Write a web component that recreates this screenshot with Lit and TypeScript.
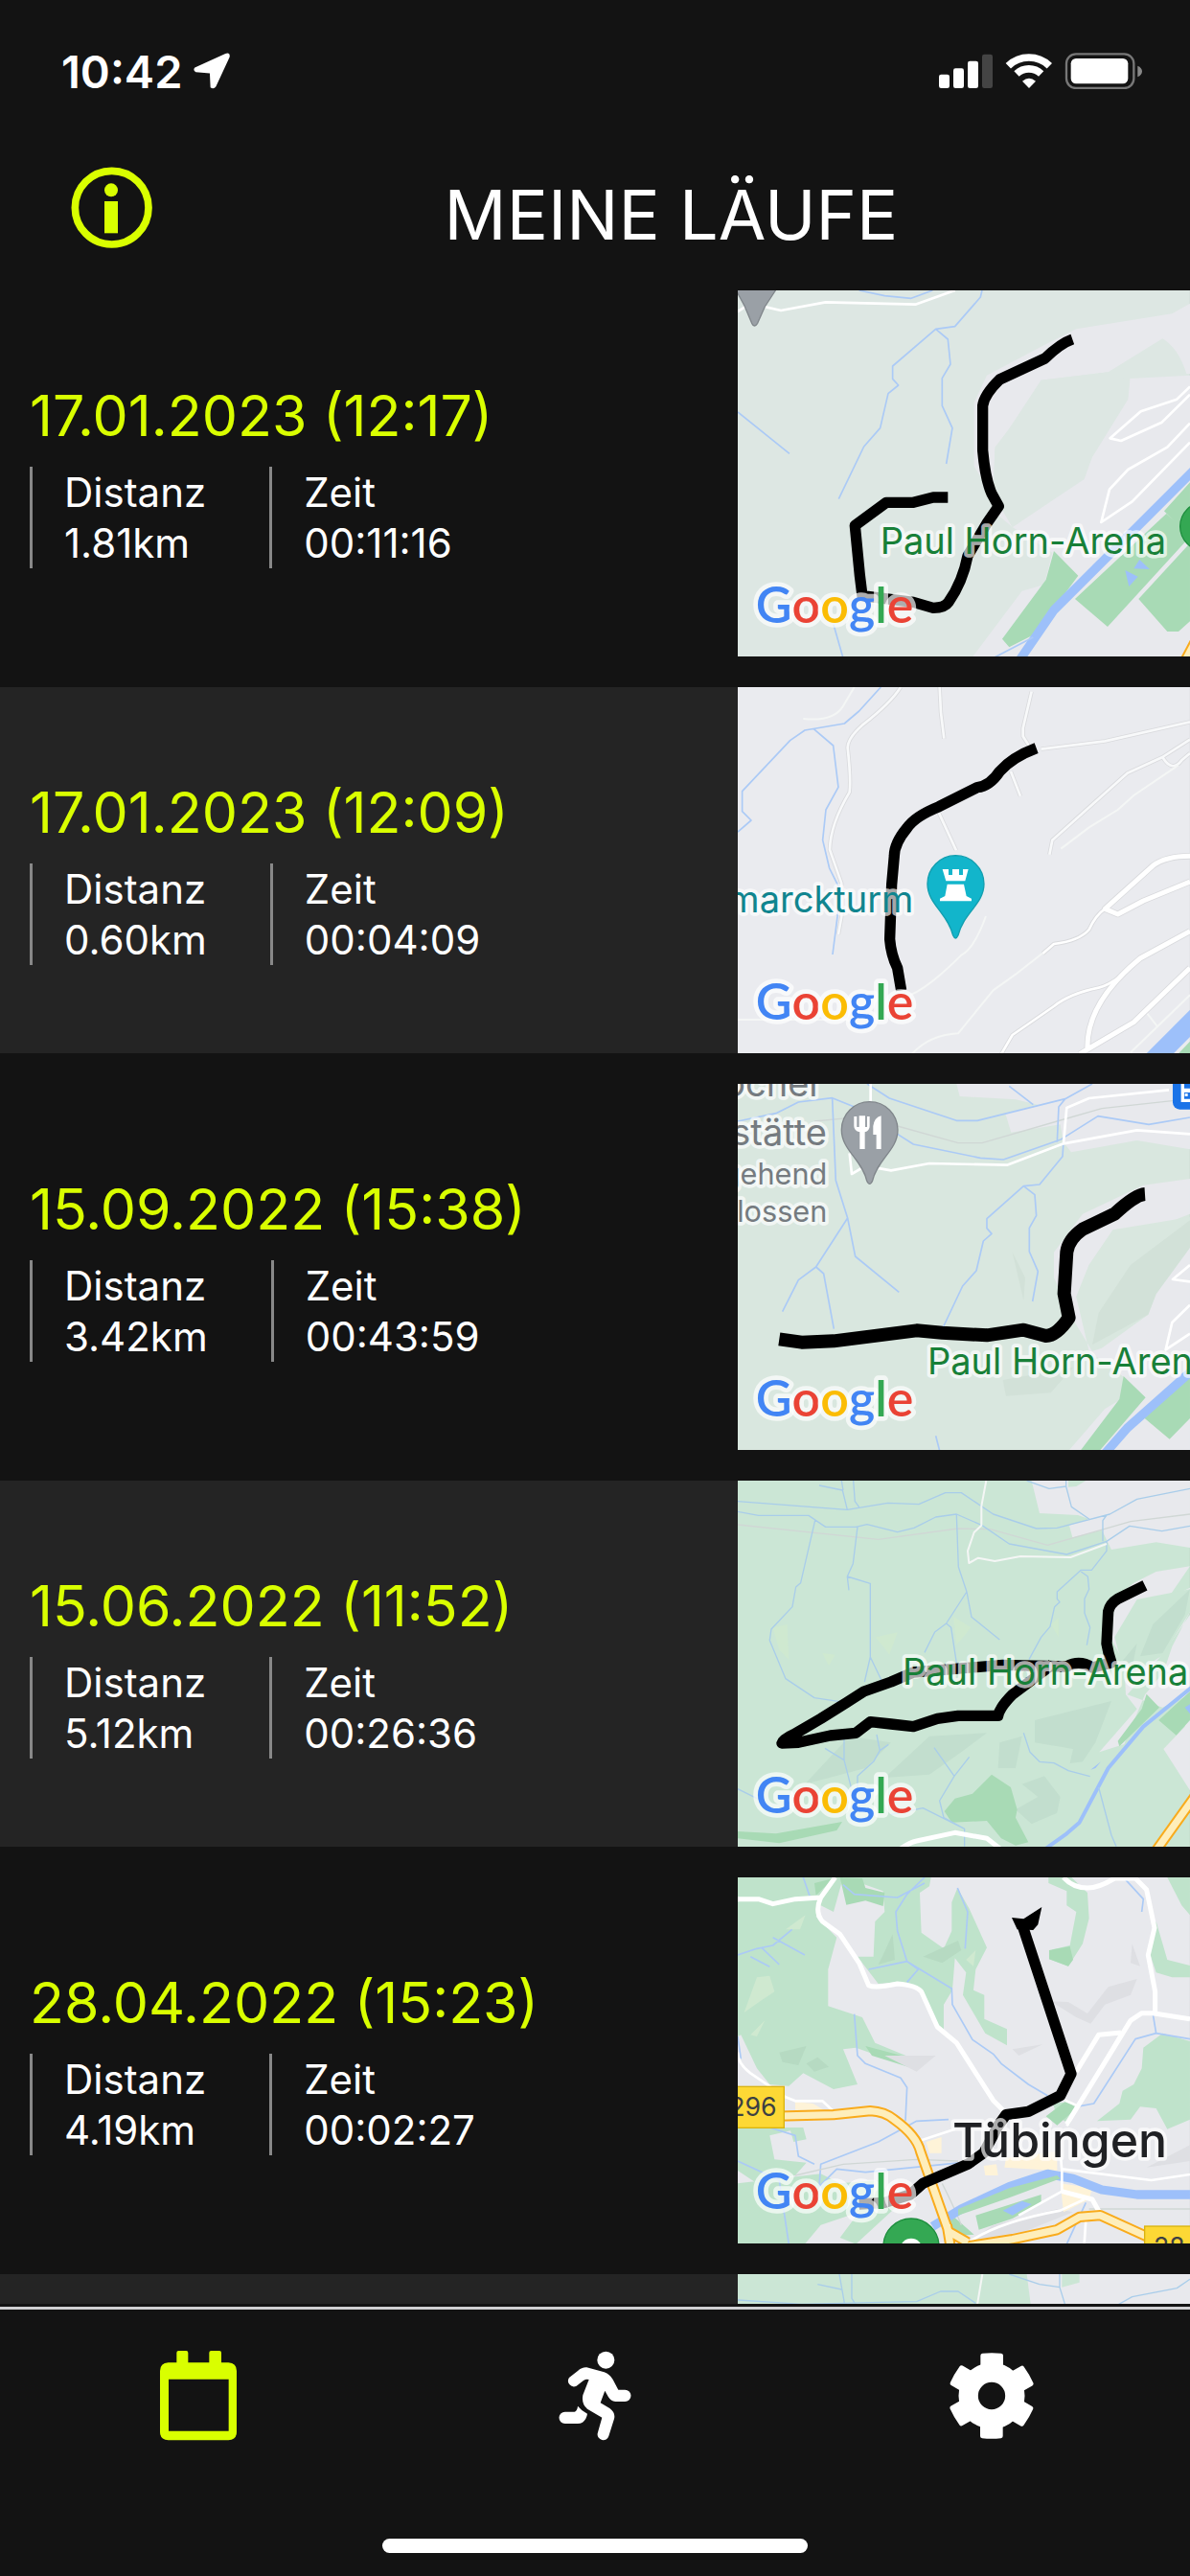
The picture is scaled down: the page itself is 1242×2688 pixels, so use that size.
import { LitElement, html, css, svg } from "lit";
import { customElement, property } from "lit/decorators.js";

interface Run {
  date: string;
  distance: string;
  time: string;
  map: string;
}

const RUNS: Run[] = [
  { date: "17.01.2023 (12:17)", distance: "1.81km", time: "00:11:16", map: "arena" },
  { date: "17.01.2023 (12:09)", distance: "0.60km", time: "00:04:09", map: "tower" },
  { date: "15.09.2022 (15:38)", distance: "3.42km", time: "00:43:59", map: "forest" },
  { date: "15.06.2022 (11:52)", distance: "5.12km", time: "00:26:36", map: "loop" },
  { date: "28.04.2022 (15:23)", distance: "4.19km", time: "00:02:27", map: "city" },
];

const logo = (y: number) => svg`
  <text class="logo halo" x="56" y=${y}><tspan class="blue">G</tspan><tspan class="red">o</tspan><tspan class="yellow">o</tspan><tspan class="blue">g</tspan><tspan class="green">l</tspan><tspan class="red">e</tspan></text>`;

const MAPS: Record<string, { top: number; art: unknown }> = {
  arena: {
    top: 9,
    art: svg`
      <rect class="wood-pale" y="0" width="1416" height="1170"/>
      <path class="land" d="M1416 50L1360 82L1060 130L960 180L780 275L740 360V560L830 700L860 750L1080 600L1110 530L1220 350L1228 285L1416 275V1170H725L890 950L960 930L985 830L860 750L800 700L805 500L860 430L950 290L1160 265L1330 160Q1380 190 1405 270H1416Z"/>
      <path class="wood-pale" d="M950 290L1160 265L1228 290L1222 350L1110 530L1085 600L860 750L800 640L805 510Z"/>
      <path class="park" d="M990 825L1066 902L930 1085L850 1126L828 1100L965 915ZM1416 610L1335 700L1365 730L1342 708L1056 975L1158 1062L1416 780ZM1416 800L1255 975L1345 1077H1380L1416 1045Z"/>
      <path class="river wide" d="M1440 560L1120 880L990 1010L880 1170"/>
      <path class="lake" d="M1240 880L1258 852L1290 882ZM1213 885L1253 905L1225 936Z"/>
      <path class="river" d="M765 9L760 30L680 122L620 130L485 246V286L503 306L471 332L446 440L395 498L316 662M620 130L658 162L666 240L640 284V370L672 440L653 552M0 390L162 520M380 9L460 26L543 34L610 9M300 1055L330 1160M800 1160L925 1095"/>
      <path class="road" d="M0 75L40 50L135 72L275 46L556 53L680 9"/>
      <path class="road" d="M1416 310L1375 350L1262 388L1166 472L1200 480L1328 422L1416 335M1416 425L1345 500L1222 570L1164 632L1138 735L1235 670L1416 485"/>
      <path class="highway-edge" d="M1450 1075L1400 1170"/><path class="highway" d="M1450 1075L1400 1170"/>
      <path class="pin-grey" d="M-10 0H124L85 60L62 112Q52 128 44 112L20 55Z"/>
      <path class="route" d="M1048 162Q1010 175 962 222L820 288Q772 335 767 370V510Q775 600 795 645L817 685L780 738L720 840Q705 920 660 985Q648 1003 612 1003L550 985L390 965L382 900L367 745L465 673H550L612 657H658"/>
      <circle class="pin-green" cx="1461" cy="748" r="76"/>
      <text class="label green-text halo" x="446" y="834">Paul Horn-Arena</text>
      ${logo(1050)}`,
  },
  tower: {
    top: 21,
    art: svg`
      <rect class="land-light" y="0" width="1416" height="1190"/>
      <path class="casing" d="M510 21Q480 70 390 140Q345 180 344 210Q355 310 350 350Q290 450 288 530L325 635V740L315 795M632 21L636 100L646 182M920 35L893 150V175L912 205M950 215L1150 190L1416 130M855 285L885 362M1416 185L1330 240L1220 290L985 500L976 545M1330 240Q1360 290 1390 250L1416 228M630 415L684 532"/>
      <path class="road thin" d="M510 21Q480 70 390 140Q345 180 344 210Q355 310 350 350Q290 450 288 530L325 635V740L315 795M632 21L636 100L646 182M920 35L893 150V175L912 205M950 215L1150 190L1416 130M855 285L885 362M1416 185L1330 240L1220 290L985 500L976 545M1330 240Q1360 290 1390 250L1416 228M630 415L684 532"/>
      <path class="path" d="M205 120Q300 130 330 80L365 21M1380 265L1240 360L1190 405L1100 460L1012 527M777 738Q740 840 700 860Q600 960 540 985M0 1062H340L400 1090M545 1170Q600 1110 690 1105L800 970L870 920L960 850M1230 1165L1416 985M1280 1040L1315 1085"/>
      <path class="casing big" d="M1416 550Q1340 550 1300 580L1150 715L1190 732L1270 690L1416 630M1416 785L1260 870Q1090 1010 1095 1155L1240 1070L1416 900M1095 1155L1070 1170"/>
      <path class="casing" d="M1150 715Q1120 735 1100 780Q1070 815 990 825L955 855M1250 880Q1180 950 1130 962Q1040 980 990 1020L860 1110L825 1170"/>
      <path class="road" d="M1150 715Q1120 735 1100 780Q1070 815 990 825L955 855M1250 880Q1180 950 1130 962Q1040 980 990 1020L860 1110L825 1170"/>
      <path class="road big" d="M1416 550Q1340 550 1300 580L1150 715L1190 732L1270 690L1416 630M1416 785L1260 870Q1090 1010 1095 1155L1240 1070L1416 900M1095 1155L1070 1170"/>
      <path class="park" d="M1378 1170L1416 1130V1170Z"/>
      <path class="river huge" d="M1460 1030L1295 1195"/>
      <path class="river" d="M448 21L380 96L334 135L210 156L164 188L14 347V410L42 438L0 474M238 152L299 204L315 334L276 405L266 500L287 588L318 650L312 740L297 858"/>
      <path class="route" d="M935 212Q860 240 820 285Q790 330 750 335L630 395Q555 425 530 462Q490 510 490 550L482 640L476 810Q480 860 500 900L512 970"/>
      <path class="pin-teal" d="M682 548A89 89 0 0 1 771 637C771 700 707 728 690 798Q682 816 674 798C657 728 594 700 594 637A89 89 0 0 1 682 548Z"/>
      <path class="glyph" d="M641 591H660V609H672V591H693V609H705V591H722L712 628H652ZM656 638H708L716 675L732 683V691H633V683L649 675Z"/>
      <text class="label teal-text halo" text-anchor="end" x="550" y="725">Bismarckturm</text>
      ${logo(1062)}`,
  },
  forest: {
    top: 33,
    art: svg`
      <rect class="wood-soft" y="0" width="1416" height="1200"/>
      <path class="land" d="M685 33L695 72L870 82L940 98L838 125L856 185L1010 160L1020 215L1044 247L1250 210L1416 238V33ZM1416 330L1270 350L1080 440L990 560V640L1050 770L1110 870L1140 860L1285 755L1310 690L1405 560L1416 540V1200H1020L1150 1050L1200 1020L1208 950L1100 870L1060 700L1100 600L1175 490L1340 470L1416 440Z"/>
      <path class="wood-soft" d="M1175 490L1416 450V545L1310 690L1285 755L1130 860L1060 700L1100 600Z"/>
      <path class="wood-shade" d="M1416 460L1230 600L1130 750L1110 850L1285 755L1310 690L1416 545ZM860 560L900 640L895 710ZM830 960L1050 920L980 1000L840 1010Z"/>
      <path class="park" d="M1208 948L1277 1015L1130 1185H1070L1195 1020ZM1400 945L1268 1075L1352 1145L1416 1080V945Z"/>
      <path class="river wide" d="M1440 915L1220 1110L1150 1190"/>
      <path class="rail" d="M240 150L345 140M500 165L690 218H765L1000 150L1140 110L1416 80"/>
      <path class="river" d="M405 33L475 78L685 148H750L1025 80L1110 33M850 40L925 98M1025 80L1005 105L1000 215M500 190L550 222L760 265L832 270L1010 208L1128 134L1287 160L1416 138M1020 215L1017 260L945 348L895 353L780 455V485L795 502L769 525L747 618L704 666L643 795M895 353L930 380L935 445L913 484V558L940 620L923 714M0 150L120 125L190 90L296 77L365 105M296 77L307 335L344 453L368 573L505 685M344 453L245 606L190 647L140 746M245 606L269 627L301 800M620 1135L633 1185"/>
      <path class="road" d="M416 33V90M350 250L357 315L400 290L480 304L600 282L843 287L1020 220L1250 178L1416 190M1020 220L1030 108L1100 78L1350 52M1416 600L1362 645L1416 652M1416 725L1360 780L1340 865L1416 815"/>
      <path class="route thick" d="M1275 378Q1245 380 1180 440L1080 488Q1035 520 1030 560L1022 690L1037 765Q1000 820 965 822L895 803L780 820L640 812L560 805L300 838L200 842L130 832"/>
      <path class="pin-grey" d="M413 89A88 88 0 0 1 501 177C501 240 437 270 422 336Q413 356 404 336C389 270 325 240 325 177A88 88 0 0 1 413 89Z"/>
      <path class="glyph" d="M364 135H373V168H380V133H399V168H405V135H413V165Q413 180 398 184V237H382V184Q364 180 364 165ZM449 133V237H434V192H424V165Q428 138 449 133Z"/>
      <rect class="bus" x="1362" y="-10" width="90" height="123" rx="22"/>
      <path class="glyph" d="M1388 33H1398V47H1416V60H1398V80H1416V90H1388ZM1400 63h9v9h-9z"/>
      <g class="grey-text" text-anchor="end">
        <text class="label halo" x="266" y="73">Wurmlinger Kocher</text>
        <text class="label halo" x="279" y="224">Gaststätte</text>
        <text class="sub halo" x="280" y="347">Vorübergehend</text>
        <text class="sub halo" x="280" y="466">geschlossen</text>
      </g>
      <text class="label green-text halo" x="594" y="942">Paul Horn-Arena</text>
      ${logo(1074)}`,
  },
  loop: {
    top: 30,
    art: svg`
      <rect class="wood" y="0" width="1416" height="1200"/>
      <path class="land" d="M920 30L945 132L1065 138L1100 150L1038 170L1048 208L1140 185L1170 246L1310 223L1416 240V30ZM1416 298L1310 315L1240 350L1180 400L1172 530L1210 600L1215 700L1250 745L1132 880L1210 855L1275 700L1333 630L1360 550L1416 440V365L1370 388L1250 402L1180 520L1215 590ZM1416 450V1000L1333 870L1400 800L1416 700L1330 740L1220 700L1333 570Z"/>
      <path class="wood" d="M1035 30H1090L1060 48L1035 50ZM1250 402L1416 370V440L1333 575L1215 650L1180 520Z"/>
      <path class="wood-dark" d="M1416 370L1300 480L1260 580L1330 570L1400 450ZM1250 540L1200 600L1230 640ZM350 830L480 850L400 930L210 980ZM600 830L780 820L700 880L600 950L460 960ZM930 780L1170 720L1120 850L1080 910L1040 915L1050 870L930 850ZM820 850L890 830L870 930H815ZM890 980L960 955L1010 1020L1000 1070L920 1105L870 1060L940 1020Z"/>
      <path class="wood-light" d="M110 490L155 480L160 590L130 560ZM432 520L500 505L475 575ZM675 455L730 490L685 545ZM265 570L305 575L285 610ZM980 480L1005 460V520Z"/>
      <path class="park" d="M1280 698L1320 740L1195 862L1190 845L1265 745ZM1416 690L1318 780L1373 827L1416 780ZM795 950L855 990L875 1060L870 1085L910 1162L870 1172L825 1150L780 1095L670 1100L647 1065L680 1025L735 1010ZM0 1128L120 1135L327 1098L310 1125L130 1165L0 1150Z"/>
      <path class="river mid" d="M1430 670L1270 800L1160 930L1070 1100L1030 1135L960 1185"/>
      <path class="rail" d="M0 168L440 214L690 180L790 182L970 232L1170 175L1230 158L1416 135"/>
      <path class="river soft" d="M0 95L343 121L470 100L567 104L650 68H700L800 135L935 180L1000 178L1165 135L1250 88L1416 55M0 127L65 139H222L275 175H370L405 167L500 191L552 178L620 144L685 135L765 170L850 228L1030 261L1155 220L1227 172L1328 188L1416 172M255 45L328 60L343 121M325 30L330 60M362 30L367 95L380 113M242 155L197 350L182 363L171 425L105 495L100 530L150 650L240 710L320 722M375 175L361 290L343 330L348 373M343 330L415 352V582L397 660M415 582L450 655M685 135L691 300L717 378L732 457L820 528M717 378L653 477L617 504L585 568M653 477L668 490L688 620M1155 220V250L1108 310H1075L1000 378V400L1008 410L992 425L978 487L950 520L912 590M1075 315L1096 330L1100 370L1086 400V445L1103 490L1093 545M905 30L975 55L1028 48V30M1028 48L1045 112L1100 150M1155 138L1143 155V220M273 868L333 905L355 990M333 840V905M435 825L445 875L472 856M445 875L425 910L375 955V990M615 866L678 955L725 895M678 955L632 1032L645 1085L710 1120V1175M895 820L915 880L945 910L990 914L1035 938L1103 956M480 1075L580 1055L710 1120M1130 990L1170 1140L1185 1175M0 995L60 1025"/>
      <path class="lake" d="M1105 935L1137 910L1120 930ZM1400 740L1416 730V760Z"/>
      <path class="path" d="M778 30L763 110V170L740 192L720 250L724 288L753 272L805 282L885 267L1042 270L1155 228"/>
      <path class="road big" d="M510 1182Q540 1162 560 1158L680 1132L780 1150L825 1185"/>
      <path class="highway-edge" d="M1430 1020L1305 1195"/><path class="highway" d="M1430 1020L1305 1195"/>
      <path class="route" d="M1275 358L1190 400Q1165 415 1160 440L1155 540Q1160 570 1170 600L1110 615Q1070 590 1030 612L830 607L550 630L480 660L395 690L340 725L260 775L180 822Q140 840 138 852L190 850L290 828L370 820L415 785L480 792L550 800L625 775L690 766H815Q820 740 860 700L920 655L985 605"/>
      <text class="label green-text halo" x="516" y="669">Paul Horn-Arena</text>
      ${logo(1070)}`,
  },
  city: {
    top: 42,
    art: svg`
      <rect class="land" y="0" width="1416" height="1200"/>
      <path class="wood-deep" d="M0 42H605L600 70L570 90L575 215L645 265L670 210V120L688 75L725 140L780 262L745 330L738 395L772 410V485L843 517V568L775 530L705 410L715 340L680 295L672 395L645 440V520L620 500L570 390L500 370L440 375L375 290H425L430 180L460 150L455 85L400 65L330 42L300 150L260 130L245 165L310 230L283 330V445L390 480L430 560L550 610L555 642L370 575L330 580L375 690L300 705L205 655L160 695L100 690L60 640L10 535L0 540ZM973 42H1045L1095 90L1100 170L1080 250L1035 320L975 298L985 268L1040 255L1060 150L1030 130V85L973 60ZM1345 42H1416V160L1390 130ZM1310 180L1345 300L1416 318V355H1360L1310 340L1290 280ZM1416 555L1330 530L1270 575L1265 640L1240 690L1205 710L1195 750L1125 805L1230 800L1260 760L1310 765L1345 830L1416 800ZM1000 790L985 745L1060 750L1040 815ZM0 825H205L215 862L175 870L165 835L100 850L115 925L215 935L180 975L60 1000L0 960ZM0 1000L260 970L320 1000L440 990L500 1070L370 1190L320 1170L380 1090L260 1130L210 1190H0Z"/>
      <path class="park" d="M320 42L390 45L400 75L460 90L455 132L400 115L340 128ZM240 60L300 45L245 98ZM400 570L550 610L555 642L420 600ZM975 270L1040 258L1050 300L1035 320L975 298ZM1030 740L1060 765L1000 818L965 790ZM745 1100L950 1035L950 1060L860 1110L755 1145ZM660 1090L740 1160L680 1165L640 1110Z"/>
      <path class="wood-light" d="M60 355L100 350L115 400L70 430L20 465ZM150 205L212 160L195 205ZM40 535L85 490L60 540ZM715 300L745 270L738 320Z"/>
      <path class="wood-shadow" d="M455 285L485 220L492 300L440 315ZM580 290L690 240L700 270L640 310ZM130 590L215 570L190 630L140 620ZM215 625L250 605L285 635L240 650Z"/>
      <path class="land-dark" d="M980 430L1035 432L1095 468L1160 385L1250 360L1230 410L1150 440L1105 500L1060 480ZM860 580L955 565L880 600ZM1235 250L1260 320L1230 310ZM460 600H620L560 650ZM800 1130L1000 1080L1050 1090L900 1150L730 1180ZM1280 950L1416 880V930Z"/>
      <path class="sand" d="M180 745L235 750L270 770H180ZM590 870L638 855V905H600ZM770 945L810 940L815 975L775 975ZM840 920L1000 900V960L835 950ZM1010 1000L1110 1015L1100 1050L1020 1090Z"/>
      <path class="river" d="M0 285L60 265L110 255L170 205M75 262L130 315M110 230L210 285M40 290L100 322M585 42L530 95L495 150L500 210L530 305L670 390L672 440L735 550L800 595L825 625L910 690L970 725M410 330L530 305M530 305L565 330L530 370M330 65L365 95L500 105L585 60M688 75L720 150L712 265M365 470L375 600L400 625L510 670L530 700L525 805M1300 470L1310 530L1245 548L1115 750L1060 760M1310 530L1416 548M1215 50L1270 110L1265 150M660 800L560 805L440 870L260 940L255 1010M255 1010L310 955L400 965L700 935M0 930L130 990L160 1190M100 825L180 850L190 915L240 940M1090 1060L1030 1190M205 42L225 100M0 540L10 610"/>
      <path class="rail" d="M180 975L330 940L560 925L690 930M640 1000Q680 1080 700 1130M1100 1080H1416"/>
      <path class="river wide" d="M610 1135L700 1080L850 1010L970 970L1050 985L1140 1020L1250 1035H1416"/>
      <path class="park" d="M690 1080L850 1015L1000 975L1010 985L850 1045L690 1100Z"/>
      <path class="lake" d="M830 1085L890 1055L920 1065L860 1100Z"/>
      <path class="road" d="M0 590Q0 625 40 655L150 730L180 742H265L300 775M1030 820L1200 530M1060 755L1025 740M575 865L680 830M730 1180Q820 1120 1010 1085L1085 1050M1015 955L1295 990L1416 972M1010 900L1015 960V1025L880 1100M1090 1115L1085 1190"/>
      <path class="road big" d="M0 110H65L110 125L180 110L260 105L305 42M260 105Q240 150 265 180L320 220L380 310L410 380Q430 390 500 375Q560 380 575 400L625 510L685 560L800 740L830 770M1020 42Q1050 75 1095 75Q1130 75 1180 45H1245L1280 80L1305 200L1285 285L1307 400V465M1416 485L1300 467H1265L1230 490L1030 815M1060 650L1130 535L1200 528M1015 1025L1110 1050L1135 1095"/>
      <path class="highway-edge" d="M100 790L300 785L415 773Q460 775 490 800Q560 850 572 900L660 1150L720 1185M665 1190L655 1130M700 1200L860 1175L1000 1145L1070 1105L1135 1100L1300 1175"/>
      <path class="highway" d="M100 790L300 785L415 773Q460 775 490 800Q560 850 572 900L660 1150L720 1185M665 1190L655 1130M700 1200L860 1175L1000 1145L1070 1105L1135 1100L1300 1175"/>
      <path class="route" d="M890 188L1044 657L1010 725L910 775L840 785L815 820L770 905L720 940L580 1000L540 1035L460 1060L380 1065"/>
      <path class="splash" d="M858 168L895 172L952 135L940 190L925 207L875 205Z"/>
      <rect class="shield" x="-40" y="697" width="185" height="129"/>
      <text class="road-number" text-anchor="end" x="122" y="789">B296</text>
      <rect class="shield" x="1274" y="1134" width="180" height="130"/>
      <text class="road-number" x="1302" y="1228">28</text>
      <text class="city-name halo" x="672" y="918">Tübingen</text>
      <circle class="pin-green" cx="543" cy="1197" r="87"/><circle class="glyph" cx="543" cy="1206" r="34"/>
      ${logo(1081)}`,
  },
  next: {
    top: 1284,
    art: svg`
      <rect class="wood" y="1284" width="1416" height="1146"/>
      <path class="land" d="M905 1284L920 1400H1416V1284Z"/>
      <path class="wood" d="M1015 1284H1070V1310L1015 1325Z"/>
      <path class="river soft" d="M0 1365L200 1378L450 1372L560 1370L635 1338H690L745 1375M250 1316L325 1332M318 1284L335 1380M357 1284V1360L370 1380M850 1284L945 1316L1008 1325V1284M1008 1325L1025 1380M1190 1380L1235 1355L1375 1328L1416 1300"/>
      <path class="path" d="M766 1284L750 1380"/>`,
  },
};

@customElement("run-map")
export class RunMap extends LitElement {
  @property() name = "arena";

  static styles = css`
    :host { display: block; overflow: hidden; }
    svg { display: block; width: 100%; height: 382px; font-family: Inter, "Liberation Sans", sans-serif; }
    .land { fill: #e8e9ed; }
    .land-light { fill: #eaebef; }
    .land-dark { fill: #dedfe3; }
    .wood-pale { fill: #dde7e3; }
    .wood-soft { fill: #d9e7df; }
    .wood-shade { fill: #d2e1d8; }
    .wood { fill: #cbe6d5; }
    .wood-dark { fill: #c2dece; }
    .wood-light { fill: #cfe9d0; }
    .wood-deep { fill: #bfe3cb; }
    .wood-shadow { fill: #b6dac2; }
    .park { fill: #a8dab5; }
    .sand { fill: #fef3d8; }
    .lake { fill: #9dc0fa; }
    path { stroke-linejoin: round; }
    .river, .road, .casing, .path, .rail, .highway, .highway-edge, .route { fill: none; }
    .river { stroke: #abcaf6; stroke-width: 5; }
    .river.soft { stroke: #a9cdea; stroke-width: 4; }
    .river.mid { stroke: #9dc0fa; stroke-width: 12; }
    .river.wide { stroke: #9dc0fa; stroke-width: 28; }
    .river.huge { stroke: #9dc0fa; stroke-width: 60; }
    .road { stroke: #fff; stroke-width: 8; }
    .road.thin { stroke: #f8f9fa; stroke-width: 8; }
    .road.big { stroke-width: 15; }
    .casing { stroke: #d9dadd; stroke-width: 13; }
    .casing.big { stroke-width: 20; }
    .path { stroke: #f4f6f5; stroke-width: 6; }
    .rail { stroke: #d0d7d5; stroke-width: 4; }
    .highway-edge { stroke: #f9ab1c; stroke-width: 34; }
    .highway { stroke: #feeebb; stroke-width: 22; }
    .route { stroke: #000; stroke-width: 34; }
    .route.thick { stroke-width: 42; }
    .splash { fill: #000; }
    .pin-grey { fill: #9aa0a6; stroke: #80868b; stroke-width: 4; }
    .pin-teal { fill: #12b5cb; stroke: #129eaf; stroke-width: 4; }
    .pin-green { fill: #34a853; stroke: #1e8e3e; stroke-width: 4; }
    .glyph { fill: #fff; }
    .bus { fill: #1a73e8; }
    .shield { fill: #fdd835; stroke: #d9b310; stroke-width: 4; }
    .halo { paint-order: stroke; stroke: #fff; stroke-opacity: 0.68; stroke-width: 22; stroke-linejoin: round; }
    .label { font-size: 114px; }
    .sub { font-size: 92px; }
    .city-name { font-size: 150px; font-weight: 500; fill: #202124; }
    .road-number { font-size: 80px; fill: #3c4043; }
    .green-text { fill: #188038; }
    .teal-text { fill: #10858f; }
    .grey-text { fill: #757b80; }
    .logo { font-family: Lato, sans-serif; font-size: 156px; font-weight: 600; stroke-width: 28; }
    .blue { fill: #4285f4; }
    .red { fill: #ea4335; }
    .yellow { fill: #fbbc04; }
    .green { fill: #34a853; }
  `;

  render() {
    const map = MAPS[this.name];
    return html`<svg viewBox="0 ${map.top} 1416 1146" preserveAspectRatio="xMidYMid slice" role="img" aria-label="Karte">${map.art}</svg>`;
  }
}

@customElement("app-root")
export class AppRoot extends LitElement {
  static styles = css`
    :host {
      display: flex;
      flex-direction: column;
      height: 100vh;
      overflow: hidden;
      background: #131313;
      color: #fff;
      font-family: Inter, "Liberation Sans", sans-serif;
    }
    svg { display: block; }
    button, a { color: inherit; background: none; border: 0; padding: 0; }
    .status { display: flex; align-items: center; justify-content: space-between; height: 148px; flex: none; padding: 0 49px 0 64px; box-sizing: border-box; }
    .clock { display: flex; align-items: center; gap: 12px; font-size: 47px; font-weight: 600; }
    .header { display: flex; align-items: flex-start; height: 155px; flex: none; padding: 26px 0 0 74px; box-sizing: border-box; }
    .info { color: #d9ff00; }
    h1 { flex: 1; margin: 0; text-align: center; font-size: 72px; line-height: 100px; font-weight: 400; }
    ul { flex: 1; min-height: 0; overflow: hidden; margin: 0 0 3px; padding: 0; list-style: none; display: flex; flex-direction: column; gap: 32px; }
    li { flex: none; display: grid; grid-template-columns: 62fr 38fr; align-items: center; }
    li:nth-child(even) { background: #242424; }
    .details { padding-left: 31px; }
    h2 { margin: 0 0 14px; font-size: 59px; line-height: 78px; font-weight: 400; color: #d9ff00; }
    dl { margin: 0; display: flex; font-size: 42px; line-height: 53px; }
    .fact { border-left: 3px solid #888; padding: 0 66px 0 33px; }
    dt, dd { margin: 0; }
    nav { flex: none; display: grid; grid-template-columns: repeat(3, 1fr); border-top: 3px solid #d0d0d3; padding: 43px 0 102px; }
    nav a { display: flex; justify-content: center; align-items: center; height: 94px; }
    nav .active { color: #d9ff00; }
    .home { flex: none; width: 444px; height: 15px; margin: 0 auto 24px; border-radius: 8px; background: #fff; }
  `;

  render() {
    return html`
      <div class="status">
        <div class="clock">
          <span>10:42</span>
          <svg width="38" height="38" viewBox="460 49 112 112" fill="currentColor"><path d="M558 52Q573 47 571 62L529 153Q522 163 512 156L510 112L467 109Q457 103 464 95Z"/></svg>
        </div>
        <svg width="213" height="38" viewBox="58 45 639 114" fill="#fff">
          <rect x="58" y="113" width="33" height="43" rx="7"/><rect x="103" y="94" width="33" height="62" rx="7"/><rect x="148" y="71" width="33" height="85" rx="7"/><rect x="193" y="50" width="33" height="106" rx="7" fill="#444"/>
          <g fill="none" stroke="#fff" stroke-width="23"><path d="M275 86A93 93 0 0 1 404 86"/><path d="M301 111A56 56 0 0 1 378 111"/></g>
          <path d="M319 134Q340 116 361 134L340 156Z"/>
          <rect x="457" y="49" width="211" height="107" rx="30" fill="none" stroke="#777" stroke-width="7"/>
          <rect x="471" y="63" width="179" height="79" rx="16"/><path d="M680 86Q694 92 694 103Q694 115 680 121Z" fill="#888"/>
        </svg>
      </div>
      <header class="header">
        <button class="info" aria-label="Info">
          <svg width="85" height="85" viewBox="73 399 255 255" fill="currentColor"><circle cx="201" cy="527" r="115" fill="none" stroke="currentColor" stroke-width="23"/><circle cx="199" cy="472" r="21"/><rect x="178" y="507" width="42" height="100"/></svg>
        </button>
        <h1>MEINE LÄUFE</h1>
      </header>
      <ul>
        ${RUNS.map((run) => html`
          <li>
            <div class="details">
              <h2>${run.date}</h2>
              <dl>
                <div class="fact"><dt>Distanz</dt><dd>${run.distance}</dd></div>
                <div class="fact"><dt>Zeit</dt><dd>${run.time}</dd></div>
              </dl>
            </div>
            <run-map name=${run.map}></run-map>
          </li>`)}
        <li><div></div><run-map name="next"></run-map></li>
      </ul>
      <nav>
        <a class="active" href="#runs" aria-label="Läufe">
          <svg width="80" height="94" viewBox="51 53 240 282" fill="currentColor"><path fill-rule="evenodd" d="M109 53H133Q139 53 139 59V90H205V59Q205 53 211 53H237Q243 53 243 59V90H265Q291 92 291 116V307Q291 331 265 333H77Q51 331 51 307V116Q51 92 77 90H103V59Q103 53 109 53ZM78 142V304H266V142Z"/></svg>
        </a>
        <a href="#run" aria-label="Laufen">
          <svg width="76" height="94" viewBox="1302 53 228 282" fill="currentColor"><circle cx="1450" cy="82" r="27"/><path d="M1335 137L1362 116Q1375 104 1390 105L1445 120Q1462 126 1472 143L1489 175H1510A18 18 0 0 1 1510 212H1480Q1465 210 1458 198L1447 178L1433 216L1462 233Q1481 247 1476 266L1459 320A18 18 0 0 1 1424 312L1438 262L1392 235Q1373 220 1378 192L1397 143Q1385 140 1379 147L1358 163A18 18 0 0 1 1335 137Z"/><path d="M1322 244H1352Q1361 240 1362 226Q1375 242 1392 250Q1390 266 1377 277Q1370 281 1362 281H1322A18 18 0 0 1 1322 244Z"/></svg>
        </a>
        <a href="#settings" aria-label="Einstellungen">
          <svg width="88" height="90" viewBox="65 58 264 270" fill="currentColor"><circle cx="197" cy="193" r="73" fill="none" stroke="currentColor" stroke-width="61"/>
            ${[0, 60, 120, 180, 240, 300].map((a) => svg`<path transform="rotate(${a} 197 193)" d="M162 110V67Q162 61 168 60Q197 57 227 60Q233 61 233 67V110Z"/>`)}
          </svg>
        </a>
      </nav>
      <div class="home"></div>
    `;
  }
}
